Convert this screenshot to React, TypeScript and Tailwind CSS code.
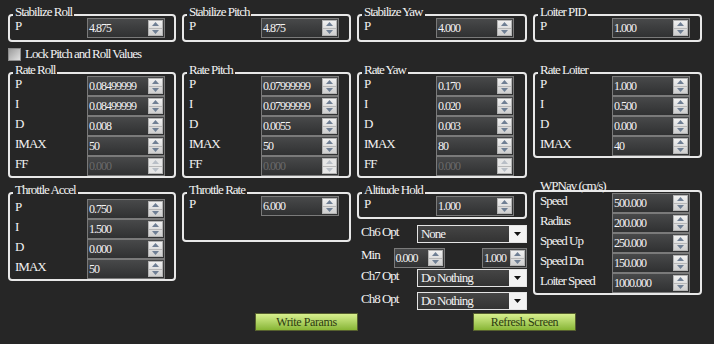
import React from 'react';

const cols = 'grid grid-cols-[168px_169px_170px_169px] gap-x-[6px]';

const Arrow = ({ up, disabled }: { up?: boolean; disabled?: boolean }) => (
  <svg width="7" height="4" viewBox="0 0 7 4">
    <path d={up ? 'M0 4 L3.5 0 L7 4 Z' : 'M0 0 L3.5 4 L7 0 Z'} fill={disabled ? '#b8bec6' : '#6f7f94'} />
  </svg>
);

const Spin = ({ value, disabled, width = 'w-[78px]' }: { value: string; disabled?: boolean; width?: string }) => (
  <div className={`flex h-[20px] shrink-0 border border-[#7a7a7a] bg-gradient-to-b from-[#48494a] to-[#303132] ${width}`}>
    <span
      className={`flex-1 overflow-hidden whitespace-nowrap pl-[1px] text-[12px] leading-[18px] tracking-[-1px] ${
        disabled ? 'text-[#6a6a6a]' : 'text-[#f4f4f4]'
      }`}
    >
      {value}
    </span>
    <div
      className={`my-[1px] mr-[1px] flex w-[15px] flex-col border border-[#b4b4b4] ${
        disabled ? 'bg-[#e6e6e6]' : 'bg-gradient-to-b from-[#f0f0f0] to-[#cfcfcf]'
      }`}
    >
      <div className="flex flex-1 items-center justify-center border-b border-[#b8b8b8]">
        <Arrow up disabled={disabled} />
      </div>
      <div className="flex flex-1 items-center justify-center">
        <Arrow disabled={disabled} />
      </div>
    </div>
  </div>
);

const Group = ({
  title,
  className = '',
  titleTop = '-top-[9px]',
  children,
}: {
  title: string;
  className?: string;
  titleTop?: string;
  children?: React.ReactNode;
}) => (
  <div className={`relative rounded-[4px] border-2 border-[#e8e8e8] ${className}`}>
    <span className={`absolute left-[3px] bg-[#262626] px-[2px] leading-[9px] ${titleTop}`}>{title}</span>
    {children}
  </div>
);

const Row = ({ label, value, disabled }: { label: string; value: string; disabled?: boolean }) => (
  <div className="flex h-[20px] items-start">
    <span className="mt-[2px] w-[77px] shrink-0 pl-[5px] leading-[12px]">{label}</span>
    <Spin value={value} disabled={disabled} />
  </div>
);

const Select = ({ value }: { value: string }) => (
  <div className="flex h-[18px] w-[112px] items-center border border-[#e4e4e4] bg-gradient-to-b from-[#454545] to-[#333333]">
    <span className="flex-1 pl-[3px] leading-[16px]">{value}</span>
    <span className="flex h-full w-[17px] items-center justify-center bg-[#f2f2f2]">
      <svg width="7" height="4" viewBox="0 0 7 4">
        <path d="M0 0 L3.5 4 L7 0 Z" fill="#111" />
      </svg>
    </span>
  </div>
);

const GreenButton = ({ label }: { label: string }) => (
  <button className="h-[18px] w-[103px] border border-[#56602f] bg-gradient-to-b from-[#d8f08e] to-[#88b634] text-[12px] leading-[16px] tracking-[-0.4px] text-[#2c3a10] [font-family:Liberation_Serif,serif]">
    {label}
  </button>
);

const rate = (p: string, i: string, d: string, imax: string) => [
  ['P', p],
  ['I', i],
  ['D', d],
  ['IMAX', imax],
];

const RateGroup = ({ title, rows, ff = true }: { title: string; rows: string[][]; ff?: boolean }) => (
  <Group title={title} className="pt-[2px]">
    {rows.map(([l, v]) => (
      <Row key={l} label={l} value={v} />
    ))}
    {ff && <Row label="FF" value="0.000" disabled />}
  </Group>
);

export default function App() {
  return (
    <div className="h-[344px] w-[714px] overflow-hidden bg-[#262626] pl-[8px] pt-[14px] text-[13px] tracking-[-1px] text-[#f2f2f2] [font-family:Liberation_Serif,serif]">
      <div className={cols}>
        {[
          ['Stabilize Roll', '4.875'],
          ['Stabilize Pitch', '4.875'],
          ['Stabilize Yaw', '4.000'],
          ['Loiter PID', '1.000'],
        ].map(([t, v]) => (
          <Group key={t} title={t} className="py-[2px]">
            <Row label="P" value={v} />
          </Group>
        ))}
      </div>

      <div className="mt-[5px] flex h-[14px] items-center gap-[4px]">
        <span className="h-[13px] w-[13px] border border-[#8c8c8c] bg-gradient-to-br from-[#9c9c9c] to-[#e2e2e2]" />
        <span className="leading-[14px]">Lock Pitch and Roll Values</span>
      </div>

      <div className={`${cols} mt-[11px] items-start`}>
        <RateGroup title="Rate Roll" rows={rate('0.08499999', '0.08499999', '0.008', '50')} />
        <RateGroup title="Rate Pitch" rows={rate('0.07999999', '0.07999999', '0.0055', '50')} />
        <RateGroup title="Rate Yaw" rows={rate('0.170', '0.020', '0.003', '80')} />
        <RateGroup title="Rate Loiter" rows={rate('1.000', '0.500', '0.000', '40')} ff={false} />
      </div>

      <div className={`${cols} mt-[14px] items-start`}>
        <Group title="Throttle Accel" className="pt-[5px]">
          {rate('0.750', '1.500', '0.000', '50').map(([l, v]) => (
            <Row key={l} label={l} value={v} />
          ))}
        </Group>

        <Group title="Throttle Rate" className="h-[50px] pt-[2px]">
          <Row label="P" value="6.000" />
        </Group>

        <div className="flex flex-col">
          <Group title="Altitude Hold" className="pb-[1px] pt-[2px]">
            <Row label="P" value="1.000" />
          </Group>
          <div className="mt-[6px] flex h-[18px] items-center">
            <span className="-mt-[4px] w-[61px] pl-[4px] leading-[16px]">Ch6 Opt</span>
            <Select value="None" />
          </div>
          <div className="mt-[5px] flex h-[20px] items-center">
            <span className="-mt-[6px] w-[37px] pl-[4px] leading-[16px]">Min</span>
            <Spin value="0.000" width="w-[51px]" />
            <span className="w-[38px]" />
            <Spin value="1.000" width="w-[45px]" />
          </div>
          <div className="mt-[1px] flex h-[18px] items-center">
            <span className="-mt-[4px] w-[61px] pl-[4px] leading-[16px]">Ch7 Opt</span>
            <Select value="Do Nothing" />
          </div>
          <div className="mt-[5px] flex h-[18px] items-center">
            <span className="-mt-[4px] w-[61px] pl-[4px] leading-[16px]">Ch8 Opt</span>
            <Select value="Do Nothing" />
          </div>
        </div>

        <Group title="WPNav (cm/s)" className="-mt-[2px] pt-[1px]" titleTop="-top-[11px]">
          {[
            ['Speed', '500.000'],
            ['Radius', '200.000'],
            ['Speed Up', '250.000'],
            ['Speed Dn', '150.000'],
            ['Loiter Speed', '1000.000'],
          ].map(([l, v]) => (
            <Row key={l} label={l} value={v} />
          ))}
        </Group>
      </div>

      <div className="ml-[247px] mt-[3px] flex gap-[115px]">
        <GreenButton label="Write Params" />
        <GreenButton label="Refresh Screen" />
      </div>
    </div>
  );
}
